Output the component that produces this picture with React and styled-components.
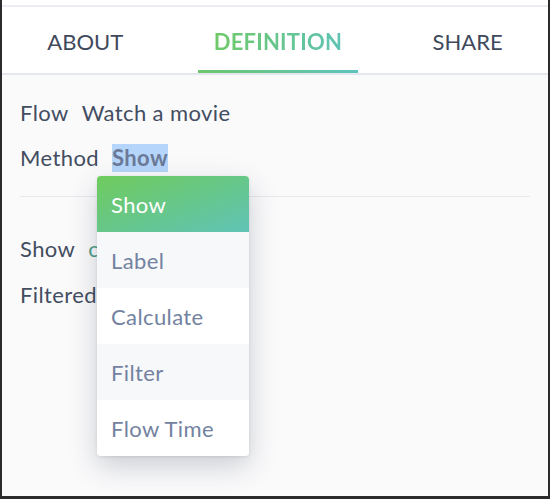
import React from "react";
import styled, { createGlobalStyle } from "styled-components";

const Global = createGlobalStyle`
  html, body { margin: 0; padding: 0; background: #ffffff; }
  body { font-family: Lato, "Liberation Sans", sans-serif; }
  * { box-sizing: border-box; }
`;

const Frame = styled.div`
  width: 550px;
  height: 499px;
  border-left: 2px solid #2b2b2b;
  border-right: 2px solid #2b2b2b;
  border-bottom: 3px solid #2b2b2b;
  background: #fafafb;
  display: flex;
  flex-direction: column;
  overflow: hidden;
`;

const TopStrip = styled.div`
  height: 7px;
  background: #ffffff;
  border-bottom: 2px solid #ebedf2;
`;

const TabBar = styled.nav`
  height: 68px;
  background: #ffffff;
  border-bottom: 2px solid #e4e7ed;
  display: flex;
  justify-content: space-around;
  align-items: stretch;
`;

const Tab = styled.div`
  position: relative;
  padding: 0 16px;
  display: flex;
  align-items: center;
  padding-top: 2px;
  font-size: 22px;
  letter-spacing: ${(p) => (p.$active ? "0.2px" : "0")};
  font-weight: ${(p) => (p.$active ? 700 : 400)};
  color: #3f495c;

  & > span {
    ${(p) =>
      p.$active
        ? `background: linear-gradient(90deg, #6fc967 0%, #5fc3b4 100%);
           -webkit-background-clip: text;
           background-clip: text;
           color: transparent;`
        : ""}
  }

  &::after {
    content: "";
    display: ${(p) => (p.$active ? "block" : "none")};
    position: absolute;
    left: 0;
    right: 0;
    bottom: 0;
    height: 3px;
    background: linear-gradient(90deg, #6dc56c 0%, #5fc3bd 100%);
  }
`;

const Content = styled.div`
  position: relative;
  flex: 1;
  padding: 24px 18px 0 18px;
  font-size: 22px;
  letter-spacing: 0.4px;
  color: #434d60;
`;

const Row = styled.div`
  display: flex;
  align-items: baseline;
  line-height: 28px;
  height: 28px;
  margin-bottom: ${(p) => p.$mb || 17}px;
`;

const Label = styled.span`
  margin-right: 13px;
`;

const Value = styled.span`
  color: ${(p) => p.$color || "#434d60"};
  font-weight: ${(p) => (p.$bold ? 700 : 400)};
  background: ${(p) => (p.$selected ? "#b5d5fb" : "transparent")};
`;

const Divider = styled.hr`
  border: 0;
  height: 1px;
  background: #e6e8ec;
  margin: 24px 0 38px 0;
`;

const Menu = styled.ul`
  position: absolute;
  left: 95px;
  top: 101px;
  width: 152px;
  margin: 0;
  padding: 0;
  list-style: none;
  background: #ffffff;
  border-radius: 4px;
  overflow: hidden;
  box-shadow: 0 10px 28px rgba(40, 50, 70, 0.22), 0 1px 3px rgba(40, 50, 70, 0.12);
`;

const Item = styled.li`
  height: 56px;
  display: flex;
  align-items: center;
  padding: 0 14px;
  font-size: 22px;
  letter-spacing: 0.4px;
  color: ${(p) => (p.$active ? "#ffffff" : "#7382a0")};
  background: ${(p) =>
    p.$active
      ? "linear-gradient(160deg, #6fcb5c 0%, #5fc3b6 100%)"
      : p.$shade
      ? "#f7f8fa"
      : "#ffffff"};
`;

const items = ["Show", "Label", "Calculate", "Filter", "Flow Time"];

export default function App() {
  return (
    <>
      <Global />
      <Frame>
        <TopStrip />
        <TabBar>
          <Tab><span>ABOUT</span></Tab>
          <Tab $active><span>DEFINITION</span></Tab>
          <Tab><span>SHARE</span></Tab>
        </TabBar>
        <Content>
          <Row>
            <Label>Flow</Label>
            <Value>Watch a movie</Value>
          </Row>
          <Row>
            <Label>Method</Label>
            <Value $bold $selected $color="#6b7a98">Show</Value>
          </Row>
          <Divider />
          <Row $mb={18}>
            <Label>Show</Label>
            <Value $color="#4e9f88">cards</Value>
          </Row>
          <Row>
            <Label>Filtered</Label>
          </Row>
          <Menu>
            {items.map((it, i) => (
              <Item key={it} $active={i === 0} $shade={i % 2 === 1}>
                {it}
              </Item>
            ))}
          </Menu>
        </Content>
      </Frame>
    </>
  );
}
